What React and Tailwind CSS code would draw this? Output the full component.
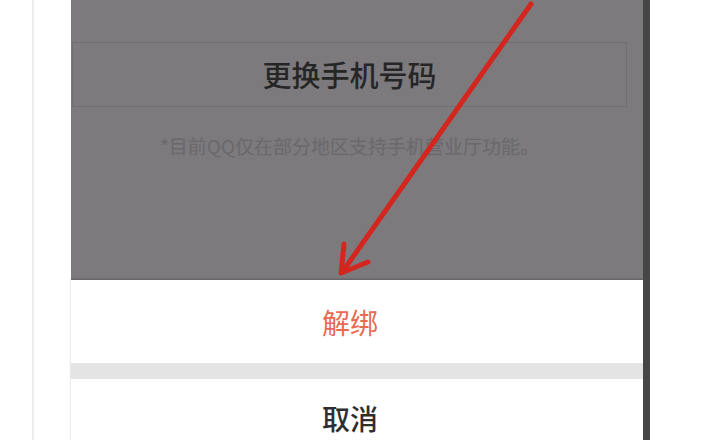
const font = { fontFamily: '"Noto Sans CJK SC", "Noto Sans", sans-serif' }

function Arrow() {
  return (
    <svg className="absolute left-0 top-0 pointer-events-none" width="701" height="440" viewBox="0 0 701 440">
      <g stroke="#d3261f" strokeWidth="5" strokeLinecap="round" strokeLinejoin="round" fill="none">
        <path d="M531 4 L343 271" />
        <path d="M344 244 L341 273 L368 262" />
      </g>
    </svg>
  )
}

export default function App() {
  return (
    <div className="relative w-[701px] h-[440px] bg-white flex overflow-hidden" style={font}>
      <div className="w-[32px] shrink-0" />
      <div className="w-[2px] shrink-0 bg-[#ededed]" />
      <div className="w-[37px] shrink-0" />

      <div className="w-[572px] shrink-0 flex flex-col">
        <div className="h-[280px] shrink-0 bg-[#7c7a7d] pt-[42px]">
          <div className="ml-[1px] w-[555px] flex flex-col items-center">
            <div className="w-full h-[65px] border border-[#716f72] flex items-center justify-center text-[29px] font-medium text-[#262626]">
              更换手机号码
            </div>
            <p className="mt-[28px] leading-[22px] text-[19px] text-[#6a686b]">
              *目前QQ仅在部分地区支持手机营业厅功能。
            </p>
          </div>
        </div>

        <div className="bg-white shadow-[0_-1px_2px_rgba(0,0,0,0.25)] flex flex-col">
          <div className="h-[83px] flex items-center justify-center pr-[14px] text-[28px] text-[#e96a52]">
            解绑
          </div>
          <div className="h-[16px] bg-[#e4e4e4]" />
          <div className="h-[78px] flex items-center justify-center pr-[14px] text-[28px] font-medium text-[#2e2e2e]">
            取消
          </div>
        </div>
      </div>

      <div className="w-[7px] shrink-0 bg-[#464646]" />
      <div className="flex-1" />

      <Arrow />
    </div>
  )
}
